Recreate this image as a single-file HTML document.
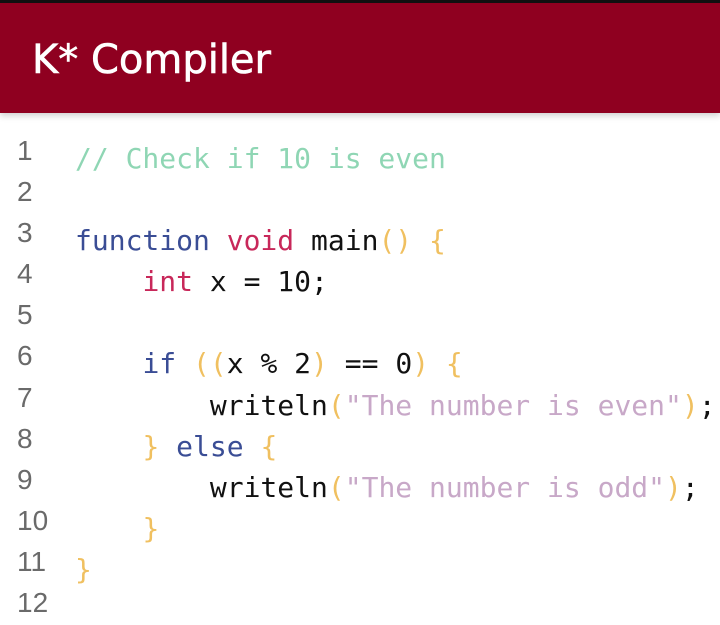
<!DOCTYPE html>
<html><head><meta charset="utf-8"><style>
*{margin:0;padding:0;box-sizing:border-box}
body{width:720px;height:625px;background:#fff;overflow:hidden;position:relative;font-family:"Liberation Sans",sans-serif}
.top{position:absolute;left:0;top:0;width:720px;height:3px;background:#111}
.hdr{position:absolute;left:0;top:3px;width:720px;height:110px;background:#8f0020;box-shadow:0 3px 6px rgba(0,0,0,.18)}
.hdr span{position:absolute;left:32px;top:35px;color:#fff;font-size:40px;line-height:44px;font-family:"DejaVu Sans","Liberation Sans",sans-serif;-webkit-text-stroke:0.6px #fff}
.nums{position:absolute;left:17px;top:130px;font-size:28px;line-height:41.1px;color:#6a6a6a;font-family:"Liberation Sans",sans-serif}
.code{position:absolute;left:75px;top:138px;font-family:"DejaVu Sans Mono",monospace;font-size:28px;line-height:41.1px;color:#111;white-space:pre}
.c{color:#8fd6b4}.k{color:#3a4d95}.t{color:#c8285a}.b{color:#f0c060}.s{color:#c8a8c8}
</style></head><body>
<div class="top"></div>
<div class="hdr"><span>K* Compiler</span></div>
<div class="nums">1<br>2<br>3<br>4<br>5<br>6<br>7<br>8<br>9<br>10<br>11<br>12</div>
<div class="code"><span class="c">// Check if 10 is even</span>

<span class="k">function</span> <span class="t">void</span> main<span class="b">()</span> <span class="b">{</span>
    <span class="t">int</span> x = 10;

    <span class="k">if</span> <span class="b">((</span>x % 2<span class="b">)</span> == 0<span class="b">)</span> <span class="b">{</span>
        writeln<span class="b">(</span><span class="s">"The number is even"</span><span class="b">)</span>;
    <span class="b">}</span> <span class="k">else</span> <span class="b">{</span>
        writeln<span class="b">(</span><span class="s">"The number is odd"</span><span class="b">)</span>;
    <span class="b">}</span>
<span class="b">}</span>
</div>
</body></html>
